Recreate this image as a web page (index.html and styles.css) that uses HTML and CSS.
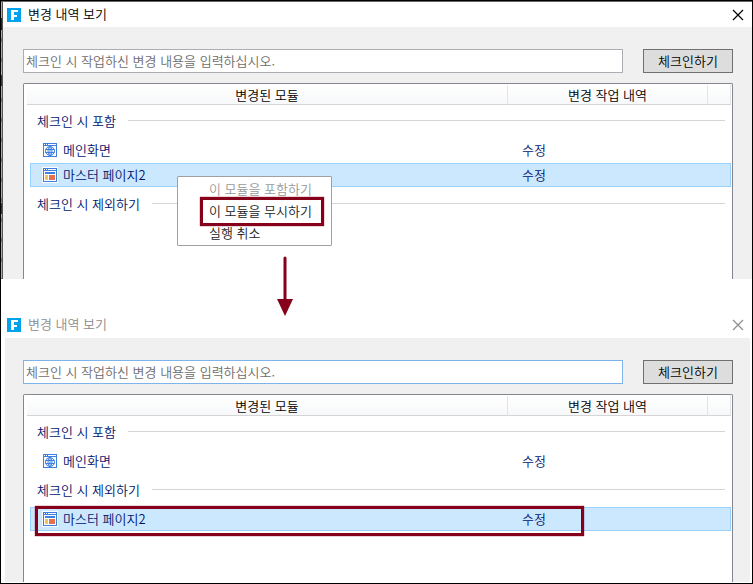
FILE: index.html
```
<!DOCTYPE html>
<html lang="ko">
<head>
    <meta charset="utf-8">
    <title>변경 내역 보기</title>
    <link rel="stylesheet" href="styles.css">
</head>
<body>
    <svg class="defs" width="0" height="0">
        <symbol id="icon-app" viewBox="0 0 14 14">
            <rect width="14" height="14" fill="#00a2ed"/>
            <path d="M4 2h7v2H7v3h3v2H7v3H4z" fill="#fff"/>
        </symbol>
        <symbol id="icon-close" viewBox="0 0 12 12">
            <path d="M1 1l10 10M11 1L1 11" fill="none" stroke="currentColor" stroke-width="1.2"/>
        </symbol>
        <symbol id="icon-screen" viewBox="0 0 16 16">
            <rect width="16" height="16" fill="#fff"/>
            <rect x="1.5" y="1.5" width="13" height="13" fill="#fff" stroke="#3f7fe0"/>
            <path d="M1 1h14v3H1z" fill="#3f7fe0"/>
            <path d="M2 2.5h1M4 2.5h1M6 2.5h8" stroke="#fff"/>
            <g fill="none" stroke="#3f7fe0">
                <circle cx="8" cy="9" r="4.5"/>
                <ellipse cx="8" cy="9" rx="2" ry="4.5"/>
                <path d="M3.5 7.5h9M3.5 10.5h9M8 4.5v9"/>
            </g>
        </symbol>
        <symbol id="icon-master" viewBox="0 0 16 16">
            <rect width="16" height="16" fill="#fff"/>
            <rect x="1.5" y="1.5" width="13" height="13" fill="#fff" stroke="#3f7fe0"/>
            <path d="M1 1h14v3H1z" fill="#3f7fe0"/>
            <path d="M2 2.5h1M4 2.5h1M6 2.5h8" stroke="#fff"/>
            <path d="M3 5h10v2H3z" fill="#3f7fe0"/>
            <path d="M3 8h3v5H3z" fill="#f3c262"/>
            <path d="M7 8h6v5H7z" fill="#e2724c"/>
        </symbol>
    </svg>

    <main class="page">
        <section class="dialog dialog-active">
            <header class="titlebar">
                <svg class="app-icon"><use href="#icon-app"/></svg>
                <h1>변경 내역 보기</h1>
                <button type="button" class="close" aria-label="닫기"><svg><use href="#icon-close"/></svg></button>
            </header>
            <div class="content">
                <form class="checkin">
                    <input type="text" aria-label="변경 내용" placeholder="체크인 시 작업하신 변경 내용을 입력하십시오.">
                    <button type="button">체크인하기</button>
                </form>
                <div class="list">
                    <table>
                        <colgroup><col><col class="col-work"><col class="col-end"></colgroup>
                        <thead>
                            <tr><th>변경된 모듈</th><th>변경 작업 내역</th><th></th></tr>
                        </thead>
                        <tbody>
                            <tr class="group"><td colspan="3"><div>체크인 시 포함</div></td></tr>
                            <tr class="item">
                                <td><div class="module"><svg><use href="#icon-screen"/></svg>메인화면</div></td>
                                <td><div class="work">수정</div></td>
                                <td><div class="end"></div></td>
                            </tr>
                            <tr class="item selected">
                                <td>
                                    <div class="module"><svg><use href="#icon-master"/></svg>마스터 페이지2
                                        <div class="menu">
                                            <button type="button" disabled>이 모듈을 포함하기</button>
                                            <button type="button" class="marked">이 모듈을 무시하기</button>
                                            <button type="button">실행 취소</button>
                                        </div>
                                    </div>
                                </td>
                                <td><div class="work">수정</div></td>
                                <td><div class="end"></div></td>
                            </tr>
                            <tr class="group"><td colspan="3"><div>체크인 시 제외하기</div></td></tr>
                        </tbody>
                    </table>
                </div>
            </div>
        </section>

        <div class="step">
            <svg class="arrow" viewBox="0 0 16 60">
                <path d="M8 2v43" stroke="#87001b" stroke-width="3" stroke-linecap="round"/>
                <path d="M0 43h16L8 60z" fill="#87001b"/>
            </svg>
        </div>

        <section class="dialog dialog-inactive">
            <header class="titlebar">
                <svg class="app-icon"><use href="#icon-app"/></svg>
                <h1>변경 내역 보기</h1>
                <button type="button" class="close" aria-label="닫기"><svg><use href="#icon-close"/></svg></button>
            </header>
            <div class="content">
                <form class="checkin">
                    <input type="text" class="hot" aria-label="변경 내용" placeholder="체크인 시 작업하신 변경 내용을 입력하십시오.">
                    <button type="button">체크인하기</button>
                </form>
                <div class="list">
                    <table>
                        <colgroup><col><col class="col-work"><col class="col-end"></colgroup>
                        <thead>
                            <tr><th>변경된 모듈</th><th>변경 작업 내역</th><th></th></tr>
                        </thead>
                        <tbody>
                            <tr class="group"><td colspan="3"><div>체크인 시 포함</div></td></tr>
                            <tr class="item">
                                <td><div class="module"><svg><use href="#icon-screen"/></svg>메인화면</div></td>
                                <td><div class="work">수정</div></td>
                                <td><div class="end"></div></td>
                            </tr>
                            <tr class="group"><td colspan="3"><div>체크인 시 제외하기</div></td></tr>
                            <tr class="item selected row-marked">
                                <td><div class="module"><svg><use href="#icon-master"/></svg>마스터 페이지2</div></td>
                                <td><div class="work">수정</div></td>
                                <td><div class="end"></div></td>
                            </tr>
                        </tbody>
                    </table>
                </div>
            </div>
        </section>
    </main>
</body>
</html>
```

FILE: styles.css
```
* {
    box-sizing: border-box;
}
body {
    margin: 0;
    background: #fff;
    color: #000;
    font-family: "Noto Sans CJK KR", sans-serif;
    font-size: 13px;
    font-weight: 350;
    line-height: 20px;
}
button, input {
    font: inherit;
    color: inherit;
}
.defs {
    position: absolute;
}
.page {
    display: flex;
    flex-direction: column;
    min-height: 100vh;
    border: 1px solid #000;
}

/* dialog */
.dialog {
    display: flex;
    flex-direction: column;
}
.dialog-active {
    padding-left: 2px;
    border-top: 1px solid #666;
    /* edge of the window behind */
    background:
        linear-gradient(#555, #555) 1px 0 / 1px 100% no-repeat,
        linear-gradient(#222, #222) 0 16px / 1px 12px no-repeat,
        linear-gradient(#333, #333) 0 73px / 1px 11px no-repeat,
        linear-gradient(#333, #333) 0 201px / 1px 11px no-repeat,
        repeating-linear-gradient(#aaa 0 16px, #777 16px 20px);
}
.dialog-inactive {
    flex: 1;
    padding: 0 2px 1px 4px;
}
.titlebar {
    display: flex;
    align-items: center;
    height: 25px;
    padding: 0 8px 0 4px;
    background: #fff;
}
.dialog-inactive .titlebar {
    height: 26px;
    padding: 0 6px 0 2px;
    color: #8c8c8c;
}
.app-icon {
    width: 14px;
    height: 14px;
}
.titlebar h1 {
    flex: 1;
    margin: 0 0 0 7px;
    padding-bottom: 2px;
    font-size: 13px;
    font-weight: inherit;
}
.close {
    display: flex;
    padding: 0;
    border: 0;
    background: none;
}
.close svg {
    width: 12px;
    height: 12px;
}
.content {
    display: flex;
    flex-direction: column;
    flex: 1;
    padding: 22px 19px 0 20px;
    background: #f0f0f0;
}
.dialog-inactive .content {
    padding: 22px 17px 0 18px;
}
.checkin {
    display: flex;
    gap: 20px;
    margin-bottom: 10px;
}
.checkin input {
    flex: 1;
    min-width: 0;
    height: 24px;
    padding: 0 2px 2px;
    border: 1px solid #abadb3;
    background: #fff;
}
.checkin input.hot {
    border-color: #7eb4ea;
}
.checkin input::placeholder {
    color: #6d6d6d;
    opacity: 1;
}
.checkin button {
    width: 90px;
    height: 24px;
    padding: 0;
    border: 1px solid #707070;
    background: #ddd;
}

/* module list */
.list {
    flex: 1;
    padding: 1px 1px 0 3px;
    border: 1px solid #828790;
    border-bottom: 0;
    border-radius: 2px 2px 0 0;
    background: #fff;
}
.dialog-active .list {
    min-height: 196px;
}
table {
    width: 100%;
    table-layout: fixed;
    border-spacing: 0;
}
.col-work {
    width: 200px;
}
.col-end {
    width: 23px;
}
th, td {
    padding: 0;
}
th {
    height: 20px;
    border-right: 1px solid #e5e5e5;
    border-bottom: 1px solid #d5d5d5;
    background: linear-gradient(#fff, #f7f8fa);
    font-weight: inherit;
    line-height: 19px;
}
td {
    color: #00156e;
    vertical-align: top;
}
.group div {
    display: flex;
    align-items: center;
    gap: 12px;
    height: 33px;
    padding: 0 6px 2px 10px;
}
.group div::after {
    content: "";
    flex: 1;
    height: 1px;
    background: #d5d5d5;
}
.item td {
    height: 25px;
}
.module,
.work,
.end {
    display: flex;
    align-items: center;
    height: 24px;
    border: solid transparent;
    border-width: 1px 0;
}
.module {
    position: relative;
    margin-left: 3px;
    padding-left: 11px;
    border-left-width: 1px;
}
.module > svg {
    width: 16px;
    height: 16px;
    margin-right: 5px;
}
.work {
    padding-left: 14px;
}
.end {
    border-right-width: 1px;
}
.selected .module,
.selected .work,
.selected .end {
    border-color: #99d1ff;
    background: #cce8ff;
}

/* context menu */
.menu {
    position: absolute;
    left: 146px;
    top: 12px;
    z-index: 1;
    width: 155px;
    padding: 1px 0;
    border: 1px solid #a0a0a0;
    border-radius: 1px;
    background: #fff;
}
.menu button {
    display: block;
    position: relative;
    width: 100%;
    height: 22px;
    padding: 0 0 0 31px;
    border: 0;
    background: none;
    color: #222;
    line-height: 22px;
    text-align: left;
}
.menu button:disabled {
    color: #999;
}

/* highlight frames */
.marked::after,
.row-marked .module::after {
    content: "";
    position: absolute;
    border: 3px solid #87001b;
    box-shadow: 0 0 1px #87001b;
}
.marked::after {
    inset: -3px 7px -4px 22px;
}
.row-marked .module::after {
    inset: -2px -76px -6px 4px;
}

.step {
    position: relative;
    height: 33px;
}
.arrow {
    position: absolute;
    left: 276px;
    bottom: -4px;
    width: 16px;
    height: 60px;
}
```
